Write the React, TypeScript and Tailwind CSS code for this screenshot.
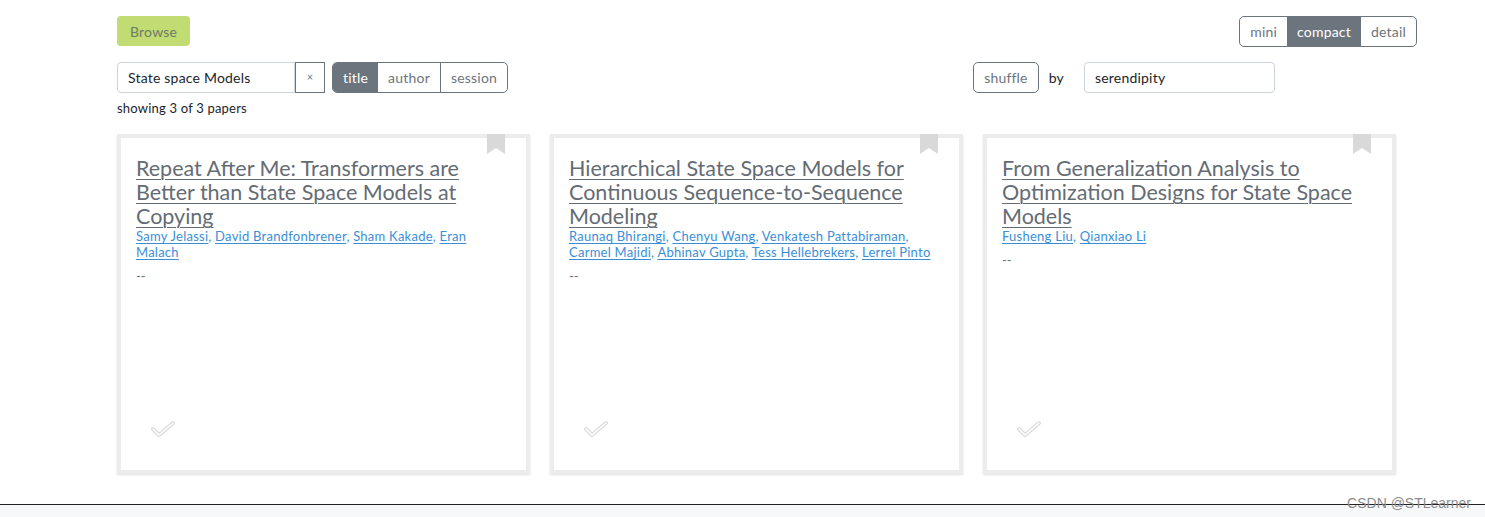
import React from "react";

const papers = [
  {
    title: "Repeat After Me: Transformers are Better than State Space Models at Copying",
    authors: ["Samy Jelassi", "David Brandfonbrener", "Sham Kakade", "Eran Malach"],
  },
  {
    title: "Hierarchical State Space Models for Continuous Sequence-to-Sequence Modeling",
    authors: [
      "Raunaq Bhirangi",
      "Chenyu Wang",
      "Venkatesh Pattabiraman",
      "Carmel Majidi",
      "Abhinav Gupta",
      "Tess Hellebrekers",
      "Lerrel Pinto",
    ],
  },
  {
    title: "From Generalization Analysis to Optimization Designs for State Space Models",
    authors: ["Fusheng Liu", "Qianxiao Li"],
  },
];

function Bookmark() {
  return (
    <svg width="18" height="20" viewBox="0 0 18 20" className="absolute top-[-4px] right-[21px]">
      <polygon points="0,0 18,0 18,20 9,14 0,20" fill="#d9d9d9" />
    </svg>
  );
}

function Check() {
  return (
    <svg width="24" height="18" viewBox="0 0 24 18">
      <polyline points="2,9 8,15 22,3" fill="none" stroke="#dcdcdc" strokeWidth="4" strokeLinecap="round" strokeLinejoin="round" />
      <polyline points="2,9 8,15 22,3" fill="none" stroke="#ffffff" strokeWidth="1.6" strokeLinecap="round" strokeLinejoin="round" />
    </svg>
  );
}

function Card({ p }: { p: (typeof papers)[number] }) {
  return (
    <div className="relative w-[413px] h-[340px] border-4 border-[#ececec] bg-white shadow-[0_1px_2px_rgba(0,0,0,0.12)] flex flex-col px-[15px] pt-[18px]">
      <Bookmark />
      <a className="text-[21.5px] leading-[24px] text-[#646c74] underline decoration-1 underline-offset-[3px] pr-[8px]">
        {p.title}
      </a>
      <div className="text-[13px] leading-[16px] tracking-[0.25px] text-[#3a8ed8] pr-[4px]">
        {p.authors.map((a, i) => (
          <React.Fragment key={a}>
            <a className="underline underline-offset-2">{a}</a>
            {i < p.authors.length - 1 ? ", " : ""}
          </React.Fragment>
        ))}
      </div>
      <div className="text-[13px] leading-[16px] text-[#6c757d] mt-[8px]">--</div>
      <div className="mt-auto mb-[32px] ml-[15px]">
        <Check />
      </div>
    </div>
  );
}

export default function App() {
  return (
    <div className="w-[1485px] h-[517px] bg-white relative overflow-hidden" style={{ fontFamily: "Lato, 'Open Sans', sans-serif" }}>
      <div className="h-[504px] pl-[117px] w-[1417px] pt-[16px]">
        <div className="flex justify-between items-start">
          <button className="h-[30px] px-[13px] rounded-[4px] bg-[#c0dc72] text-[#6f7a66] text-[14px] tracking-[0.2px]">Browse</button>
          <div className="flex h-[31px] border border-[#6c757d] rounded-[5px] overflow-hidden text-[14px] tracking-[0.2px]">
            <span className="px-[10px] flex items-center text-[#6c757d]">mini</span>
            <span className="px-[10px] flex items-center bg-[#6c757d] text-white">compact</span>
            <span className="px-[10px] flex items-center text-[#6c757d]">detail</span>
          </div>
        </div>

        <div className="flex items-center mt-[15px] tracking-[0.2px]">
          <div className="flex h-[31px]">
            <div className="w-[178px] border border-[#ced4da] rounded-l-[4px] flex items-center pl-[10px] text-[14px] text-[#212529]">
              State space Models
            </div>
            <div className="w-[30px] border border-[#6c757d] flex items-center justify-center text-[11px] text-[#6c757d]">×</div>
          </div>
          <div className="flex h-[31px] ml-[7px] border border-[#6c757d] rounded-[5px] overflow-hidden text-[14px]">
            <span className="px-[10px] flex items-center bg-[#6c757d] text-white">title</span>
            <span className="px-[10px] flex items-center text-[#6c757d] border-r border-[#6c757d]">author</span>
            <span className="px-[10px] flex items-center text-[#6c757d]">session</span>
          </div>
          <div className="flex-1" />
          <div className="flex items-center mr-[142px]">
            <span className="h-[31px] px-[10px] border border-[#6c757d] rounded-[5px] flex items-center text-[14px] text-[#6c757d]">shuffle</span>
            <span className="ml-[10px] text-[14px] text-[#212529]">by</span>
            <div className="ml-[20px] h-[31px] w-[191px] border border-[#ced4da] rounded-[4px] flex items-center pl-[10px] text-[14px] text-[#212529]">
              serendipity
            </div>
          </div>
        </div>

        <div className="text-[13px] leading-[16px] tracking-[0.2px] text-[#212529] mt-[7px]">showing 3 of 3 papers</div>

        <div className="flex gap-[20px] mt-[18px]">
          {papers.map((p) => (
            <Card key={p.title} p={p} />
          ))}
        </div>
      </div>
      <div className="h-[13px] border-t border-[#222] bg-[#f7f8fa]" />
      <div
        className="absolute right-[14px] top-[493px] text-[14px] text-[#8c8c8c]"
        style={{ fontFamily: "'Liberation Sans', Arial, sans-serif" }}
      >
        CSDN @STLearner
      </div>
    </div>
  );
}
